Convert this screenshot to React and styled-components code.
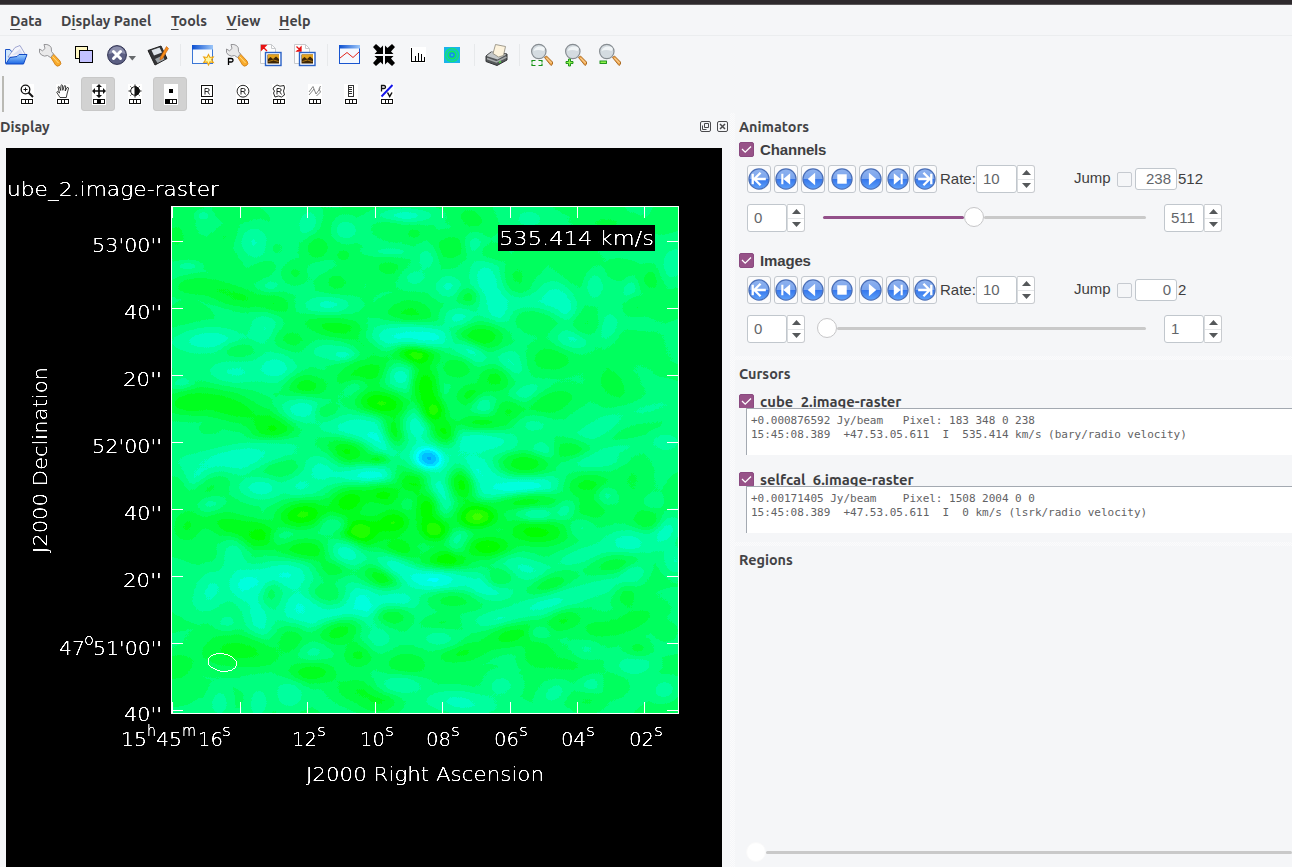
import React from 'react';
import styled, { createGlobalStyle, css } from 'styled-components';

const Global = createGlobalStyle`
  * { box-sizing: border-box; }
  html, body, #root { margin: 0; height: 100%; }
  body { background: #f5f6f8; overflow: hidden; color: #3b3b3e; }
`;
const uiFont = css`font-family: Ubuntu, 'Noto Sans', 'Open Sans', sans-serif;`;
const sans = css`font-family: 'Liberation Sans', Arial, sans-serif;`;

const Window = styled.div`
  height: 867px; width: 1292px; overflow: hidden;
  display: flex; flex-direction: column; background: #f5f6f8;
`;
const TitleStrip = styled.div`height: 5px; flex: none; background: #2e2a2d; border-bottom: 1px solid #5a5759;`;
const MenuBar = styled.nav`
  ${uiFont} height: 31px; flex: none; display: flex; padding-left: 10px;
  border-bottom: 1px solid #ebedef; font-size: 14.3px; font-weight: 600; line-height: 32px; color: #434346;
`;
const MenuItem = styled.div`
  width: ${p => p.$w}px; white-space: nowrap;
  u { text-underline-offset: 3px; text-decoration-thickness: 1px; }
`;
const Toolbar = styled.div`height: 38px; flex: none; display: flex; align-items: center; margin-left: -1px;`;
const ToolCell = styled.div`
  width: ${p => p.$w || 34}px; height: 34px; display: flex; align-items: center; justify-content: center;
  svg { display: block; flex: none; }
`;
const ToolSep = styled.div`width: ${p => p.$w || 11}px; display: flex; justify-content: center;
  &::after { content: ''; width: 1px; height: 22px; background: #e7e9eb; }`;
const MouseBar = styled.div`height: 39px; flex: none; display: flex; align-items: center; gap: 2px;`;
const Grip = styled.div`width: 2px; height: 36px; margin: 0 3px 0 2px; background: #b9b9b4;`;
const MouseButton = styled.div`
  width: 34px; height: 34px; border-radius: 3px; display: flex; align-items: center; justify-content: center;
  border: 1px solid ${p => (p.$on ? '#c8c8c8' : 'transparent')}; background: ${p => (p.$on ? '#d2d2d2' : 'transparent')};
  svg { display: block; flex: none; margin: 1px 0 0 1px; }
`;
const Body = styled.main`flex: 1; display: flex; min-height: 0;`;
const DisplayDock = styled.section`width: 730px; flex: none; display: flex; flex-direction: column;`;
const DockTitle = styled.h2`
  ${uiFont} margin: 0; height: 28px; flex: none; font-size: 14.4px; font-weight: 600;
  line-height: 28px; display: flex; align-items: center; color: #434346;
`;
const DockButtons = styled.div`display: flex; gap: 6px; padding-right: 2px; margin: -1px 0 0 auto;`;
const Filler = styled.div`flex: 1;`;
const Canvas = styled.div`margin: 7px 0 0 6px; width: 716px; height: 719px; background: #000; svg { display: block; }`;
const dots = css`background-image: conic-gradient(#fff 25%, transparent 0 50%, #fff 0 75%, transparent 0); background-size: 2px 2px;`;
const VSplit = styled.div`width: 5px; flex: none; ${dots} opacity: .55;`;
const HSplit = styled.div`height: 4px; flex: none; ${dots} opacity: .55; margin-left: -4px;`;
const Side = styled.section`flex: 1; padding-left: 4px; display: flex; flex-direction: column; min-width: 0;`;
const GroupHead = styled.div`
  height: ${p => p.$h || 15}px; flex: none; display: flex; gap: 6px; ${p => p.$clip && 'overflow: hidden;'}
  span { ${p => (p.$ui ? uiFont : sans)} font-size: ${p => (p.$ui ? 14.8 : 15)}px; font-weight: bold; line-height: 16px;
    letter-spacing: ${p => (p.$ui ? 0 : -0.15)}px; white-space: nowrap; color: #3e3e41; }
`;
const Check = styled.div`
  width: 15px; height: 15px; flex: none; border-radius: 2px; border: 1px solid ${p => (p.$on ? '#8a4a80' : '#c6cad0')};
  background: ${p => (p.$on ? '#975288' : 'transparent')}; display: flex; align-items: center; justify-content: center;
`;
const ControlRow = styled.div`height: 28px; flex: none; display: flex; align-items: center; margin: ${p => p.$m} 0 0 8px; ${sans} font-size: 15px;`;
const PlayButton = styled.div`
  width: ${p => (p.$wide ? 28 : 24)}px; height: 28px; margin-right: 3px; 
  border: 1px solid #c3c8ce; border-radius: 3px; background: #fbfbfc; display: flex; align-items: center; justify-content: center; flex: none;
  svg { flex: none; }
`;
const Label = styled.span`width: ${p => p.$w}px; flex: none; margin-left: ${p => p.$ml || 0}px; padding-bottom: ${p => p.$up || 1}px; white-space: nowrap; color: #3e3e40;`;
const Spin = styled.div`display: flex; width: ${p => p.$w}px; height: 28px; flex: none; color: #63666a;`;
const SpinField = styled.div`flex: 1; border: 1px solid #c1c7cd; border-radius: 3px; background: #fff; padding-left: 6px; line-height: 26px;`;
const SpinArrows = styled.div`
  width: 18px; border: 1px solid #c8cbcf; border-left-color: #d8dbde; border-radius: 0 3px 3px 0; background: #fff;
  display: flex; flex-direction: column; svg { display: block; margin: auto; }
  hr { margin: 0; border: 0; height: 1px; background: #e4e6e8; width: 100%; }
`;
const JumpField = styled.div`width: 42px; height: 22px; margin: 0 1px 0 3px; border: 1px solid #c1c7cd; border-radius: 3px; background: #fff;
  text-align: right; padding-right: 5px; line-height: 20px; color: #63666a;`;
const Slider = styled.div`height: 20px; width: ${p => p.$w}px; flex: none; display: flex; align-items: center; margin: 0 ${p => p.$mr || 0}px ${p => p.$mb || 0}px ${p => p.$ml || 0}px;`;
const Track = styled.div`height: 3px; border-radius: 2px; background: ${p => (p.$fill ? '#93508a' : '#c9c9c9')}; margin-top: 1px; ${p => (p.$w != null ? `width:${p.$w}px;` : 'flex:1;')}`;
const Thumb = styled.div`width: 20px; height: 20px; flex: none; border-radius: 50%; background: #fff; border: 1px solid ${p => (p.$flat ? '#fafafa' : '#c6c6c8')};`;
const CursorText = styled.pre`
  margin: 0 0 0 7px; height: 47px; flex: none; border: 1px solid #a3a9b1; border-right: 0; border-bottom: 0; background: #fff;
  font: 11px/14px 'DejaVu Sans Mono', monospace; letter-spacing: -.02px; color: #626264; padding: 5px 0 0 4px; z-index: 1;
`;
const Gap = styled.div`height: ${p => p.$h}px; flex: none;`;

/* ---------- raster field: [cx, cy, rx, ry, rotation, level] ---------- */
const A = [[100,32,30,22,0,8.2],[20,90,70,90,0,5.5],[165,95,60,40,-20,5.4],[250,110,65,85,0,8.4],[415,55,50,65,20,8.6],[525,75,55,50,0,8.6],[440,130,60,60,-30,5],[320,130,40,50,0,6],[520,152,40,35,0,5.2],[710,32,130,35,0,8.8],[650,75,80,45,0,5.4],[730,85,50,35,0,5.4],[660,140,110,25,0,8],[55,183,50,20,0,8],[280,195,60,40,-20,5.2],[372,208,60,50,0,5],[455,190,60,35,-15,7.7],[500,232,90,65,0,4.9],[665,190,80,45,0,5.3],[735,220,70,50,0,7.9],[70,243,100,45,0,4.3],[150,258,120,50,15,4.3],[210,280,110,45,10,4.3],[308,300,90,60,0,4.2],[300,243,50,30,0,7.5],[470,300,120,45,0,8.8],[715,325,120,70,0,4.3],[110,405,180,65,0,9],[285,370,80,80,0,8.7],[210,440,80,45,0,5.6],[500,370,170,50,8,4],[590,410,90,50,30,4],[370,400,90,60,0,5.4],[470,440,110,45,0,8.2],[520,450,60,30,0,8.8],[690,395,170,70,0,9.3],[735,452,100,60,0,2.2],[185,500,130,65,0,8.9],[315,485,110,80,0,8.9],[40,535,50,35,0,8.2],[60,595,130,60,0,3.4],[190,610,200,70,15,3.9],[310,668,100,70,0,3.3],[410,543,90,60,0,3.9],[590,505,160,65,-10,3.9],[690,512,70,70,0,8.7],[555,560,60,50,-30,7.8],[635,595,130,65,10,2.3],[395,612,100,60,0,8.9],[470,625,50,40,0,5.2],[765,550,60,90,0,2.9],[540,670,170,65,0,9],[620,705,110,80,20,9.8],[680,675,60,90,-20,3.8],[740,665,70,80,0,9.1],[515,738,140,60,5,3.4],[240,750,320,60,-8,8.7],[620,765,60,30,0,4]];
const B = [[150,40,90,65,20,5.2],[330,45,70,45,0,8],[570,60,150,45,0,5.6],[95,130,80,65,0,4.7],[165,115,50,55,0,8],[20,160,50,70,0,8],[215,150,60,45,0,5.1],[200,220,80,90,0,8.9],[85,243,65,55,0,8.7],[235,310,100,110,-15,9.3],[330,295,130,45,0,8.8],[400,280,100,80,0,8.9],[435,310,50,60,-30,8.7],[290,220,60,70,0,5.6],[460,190,70,110,-25,5.2],[145,275,45,40,0,5.2],[120,340,80,55,0,8.9],[20,395,140,52,5,10.2],[185,395,120,65,0,3.6],[340,350,100,60,0,5.4],[145,445,90,50,25,8.7],[280,480,85,65,0,9],[450,412,80,65,0,9],[570,365,65,90,0,8.7],[650,365,90,45,0,7.9],[525,245,45,70,0,8.1],[630,250,35,50,30,8],[695,225,55,60,0,5.1],[650,300,50,40,0,5.5],[500,360,60,50,0,5.7],[400,470,140,75,0,5],[115,490,80,60,0,4.4],[220,520,80,65,0,4.3],[155,570,80,55,0,3.9],[320,565,80,50,-10,8.3],[195,605,60,55,0,8.2],[265,620,75,60,0,4.3],[390,590,120,60,-20,4.6],[185,660,110,50,0,3.9],[575,530,90,140,-30,5.3],[650,420,130,80,0,5.6],[345,660,90,50,0,8],[550,665,140,50,-25,8.2],[660,620,150,50,-15,7.9],[180,710,170,60,0,9.5],[450,735,90,55,0,4.3],[365,735,60,55,0,8.1],[760,180,60,90,20,8],[18,550,55,90,-8,2.9],[40,615,58,66,0,2.1],[70,690,60,80,0,3.1],[740,710,70,45,0,8.1],[500,155,60,45,0,5.4],[310,770,90,40,0,4.6],[600,730,130,35,-10,7.8]];
const C = [[200,20,210,60,-15,8.9],[90,60,70,60,-30,8.7],[340,45,100,45,-10,5.6],[120,100,110,55,-35,5.4],[270,100,95,55,0,8.8],[120,155,60,45,-20,8.2],[450,40,90,100,0,8.8],[400,95,90,55,0,8.5],[600,60,180,46,0,9.7],[735,70,100,90,20,2.9],[15,120,60,90,0,5.3],[395,180,120,65,-5,2],[540,140,100,65,-20,2.5],[640,120,90,55,0,3.1],[570,230,110,80,0,1.9],[670,205,90,70,0,2.7],[200,220,170,65,15,3.4],[265,237,80,60,0,3.4],[55,210,70,70,0,4.4],[345,250,60,40,0,7.2],[490,210,60,40,0,7.3],[410,285,130,55,0,4],[490,340,90,45,0,4.8],[690,280,100,65,0,3.6],[530,295,95,60,20,9.2],[190,305,65,80,0,8.6],[350,360,130,75,0,9.4],[235,390,110,90,0,9.9],[120,410,80,110,30,8.8],[625,375,100,65,0,2.8],[680,335,120,50,25,9.2],[265,480,75,140,-10,8.9],[310,420,50,60,0,6],[395,465,110,110,20,9.8],[500,480,170,50,0,9.4],[580,450,105,115,0,10],[680,430,120,55,0,9.1],[470,410,80,45,0,6],[665,485,80,45,0,4.8],[170,505,60,50,0,8.1],[180,590,180,85,0,4.4],[270,600,120,65,20,4.5],[365,560,90,80,0,4.5],[505,530,120,60,-20,3.9],[435,595,80,55,0,7.8],[420,655,120,55,0,3.8],[20,630,80,65,0,4.7],[565,605,70,65,0,4.5],[625,550,70,60,0,8.2],[710,630,100,65,0,4.5],[570,710,130,65,10,4.5],[625,740,90,55,0,4.5],[690,690,115,50,0,8.4],[360,725,70,75,0,8.2],[265,745,50,70,0,8.1],[150,740,50,70,0,8.1]];
const D = [[170,45,140,95,20,9.9],[300,95,240,50,-3,9.7],[60,110,70,95,-10,9.2],[125,90,60,95,-20,3.2],[310,30,120,50,0,4],[500,90,120,55,0,4.5],[520,160,90,65,0,4.9],[640,100,80,130,0,5.3],[560,120,45,45,0,7.6],[530,20,140,40,-5,8.1],[170,185,100,62,0,1.2],[20,160,60,80,0,2.5],[42,225,78,64,0,1.5],[75,315,110,60,0,2.8],[120,260,50,50,0,8.2],[205,275,110,56,0,2.2],[350,230,150,65,0,3],[320,140,140,40,-5,3.9],[350,178,90,32,0,8.2],[435,165,55,40,-40,8.1],[485,220,60,45,0,7.5],[620,260,115,65,0,9],[735,230,60,95,40,8.8],[765,320,60,70,0,8.9],[700,140,45,35,0,7.6],[680,195,60,45,0,4.9],[490,300,150,45,-15,8.3],[320,340,120,55,10,8.8],[45,375,160,54,0,10.5],[190,395,130,65,15,9.4],[240,370,60,45,0,5.6],[390,390,100,50,-25,4.4],[590,330,110,50,-10,4.7],[640,360,70,45,-30,8.4],[530,400,170,50,-15,8.1],[380,450,190,55,-15,9],[240,490,130,50,-5,8.9],[90,440,110,45,0,5.1],[65,500,80,40,0,5.1],[620,430,55,60,0,5.1],[650,490,180,60,-20,5.3],[270,545,150,60,-15,4],[430,500,85,50,-20,4.7],[530,525,100,65,0,5.2],[360,535,50,40,0,7.6],[130,595,120,50,-10,4.2],[355,595,80,70,0,4.4],[430,630,140,65,10,5.2],[60,552,90,45,0,8],[500,585,65,45,0,7.6],[240,690,80,55,0,8.2],[130,740,165,65,5,9],[515,690,60,45,0,8.1],[400,715,70,45,-30,8],[590,690,70,65,0,5.5],[650,632,90,45,0,8.1],[735,705,60,55,-20,8.2],[500,745,90,50,0,5.4],[655,580,60,40,0,5.1],[740,530,50,45,0,5.2]];
const CORE = [[20,758,120,85,0,10.2],[27,760,58,44,15,13.8]];
const fields = [[170, 205, A], [420, 205, B], [170, 455, C], [420, 455, D], [420, 205, CORE]];
const levels = [...new Set(fields.flatMap(f => f[2].map(b => b[5])))];
const gray = l => { const v = Math.round(((l + 0.5) / 16) * 255); return `rgb(${v},${v},${v})`; };
const gid = l => 'lv' + String(l).replace('.', '_');
const RT = '.37 .25 .125 0 0 0 0 0 0 0 0 0 0 0 0 0';
const GT = '1 1 1 1 1 1 1 1 1 1 1 1 .87 .75 .62 .5';
const BT = '0 0 0 0 .125 .25 .37 .5 .62 .75 .87 1 1 1 1 1';

function Raster() {
  return (
    <>
      <defs>
        {levels.map(l => (
          <radialGradient id={gid(l)} key={l}>
            <stop offset="0" stopColor={gray(l)} stopOpacity="1" />
            <stop offset=".25" stopColor={gray(l)} stopOpacity=".86" />
            <stop offset=".5" stopColor={gray(l)} stopOpacity=".52" />
            <stop offset=".75" stopColor={gray(l)} stopOpacity=".18" />
            <stop offset="1" stopColor={gray(l)} stopOpacity="0" />
          </radialGradient>
        ))}
        <filter id="colormap" filterUnits="userSpaceOnUse" x="172" y="207" width="506" height="506" colorInterpolationFilters="sRGB">
          <feTurbulence type="fractalNoise" baseFrequency=".02 .03" numOctaves="1" seed="7" />
          <feColorMatrix values="1 0 0 0 0  1 0 0 0 0  1 0 0 0 0  0 0 0 0 1" result="n" />
          <feComposite in="SourceGraphic" in2="n" operator="arithmetic" k2="1" k3=".12" k4="-.06" />
          <feComponentTransfer>
            <feFuncR type="discrete" tableValues={RT} />
            <feFuncG type="discrete" tableValues={GT} />
            <feFuncB type="discrete" tableValues={BT} />
          </feComponentTransfer>
        </filter>
        <clipPath id="frame"><rect x="172" y="207" width="506" height="506" /></clipPath>
      </defs>
      <g clipPath="url(#frame)">
        <g filter="url(#colormap)">
          <rect x="172" y="207" width="506" height="506" fill={gray(6.5)} />
          {fields.map(([x, y, list], i) => (
            <g key={i} transform={`translate(${x} ${y}) scale(.33333)`}>
              {list.map(([cx, cy, rx, ry, r, l], j) => (
                <ellipse key={j} rx={rx} ry={ry} transform={`translate(${cx} ${cy}) rotate(${r})`} fill={`url(#${gid(l)})`} />
              ))}
            </g>
          ))}
        </g>
      </g>
    </>
  );
}

const PlotText = styled.text`font-family: 'DejaVu Sans', sans-serif; font-weight: 200; font-size: ${p => p.$size || 19.5}px; fill: #fff;`;
const T = ({ x, y, w, children, rot }) => (
  <PlotText x={rot ? undefined : x} y={rot ? undefined : y} textLength={w} lengthAdjust="spacingAndGlyphs" transform={rot ? `translate(${x} ${y}) rotate(-90)` : undefined}>{children}</PlotText>
);
const Sup = ({ x, y, w, children }) => (
  <PlotText x={x} y={y} textLength={w} lengthAdjust="spacingAndGlyphs" $size={15}>{children}</PlotText>
);
const yTicks = [241.5, 308.5, 375.5, 442.5, 509.5, 576.5, 643.5, 710.5];
const xTicks = [172.5, 240.5, 307.5, 375.5, 442.5, 510.5, 577.5, 644.5];
const raLabels = [['12', 292], ['10', 360], ['08', 426], ['06', 494], ['04', 561], ['02', 629]];

function Plot() {
  return (
    <svg width="716" height="719" viewBox="6 148 716 719">
      <defs>
        <filter id="pen" filterUnits="userSpaceOnUse" x="6" y="148" width="716" height="719" colorInterpolationFilters="sRGB">
          <feComponentTransfer><feFuncA type="linear" slope="2.2" intercept="-.25" /></feComponentTransfer>
        </filter>
      </defs>
      <Raster />
      <g stroke="#fff" fill="none" shapeRendering="crispEdges">
        <rect x="171.5" y="206.5" width="507" height="507" />
        {yTicks.map(y => <path key={y} d={`M172 ${y}h11M678 ${y}h-11`} />)}
        {xTicks.map(x => <path key={x} d={`M${x} 207v11M${x} 713v-11`} />)}
        <ellipse rx="14.4" ry="8.8" transform="translate(222.3 662.5) rotate(10)" />
      </g>
      <rect x="498" y="225" width="157" height="26" fill="#000" />
      <g filter="url(#pen)">
        <T x={499} y={245} w={155}>535.414 km/s</T>
        <T x={-5} y={196} w={224}>cube_2.image-raster</T>
        <T x={92} y={252} w={70}>53'00''</T>
        <T x={124} y={319} w={38}>40''</T>
        <T x={123} y={386} w={39}>20''</T>
        <T x={92} y={453} w={70}>52'00''</T>
        <T x={124} y={520} w={38}>40''</T>
        <T x={123} y={587} w={39}>20''</T>
        <T x={59} y={655} w={26}>47</T><Sup x={84} y={645} w={10}>o</Sup><T x={93} y={655} w={69}>51'00''</T>
        <T x={124} y={721} w={38}>40''</T>
        <T x={121} y={746} w={26}>15</T><Sup x={147} y={736} w={9}>h</Sup>
        <T x={156} y={746} w={26}>45</T><Sup x={182} y={736} w={14}>m</Sup>
        <T x={198} y={746} w={25}>16</T><Sup x={222} y={736} w={9}>s</Sup>
        {raLabels.map(([t, x]) => <g key={t}><T x={x} y={746} w={25}>{t}</T><Sup x={x + 25} y={736} w={9}>s</Sup></g>)}
        <T x={306} y={781} w={238}>J2000 Right Ascension</T>
        <T x={47} y={553} w={186} rot>J2000 Declination</T>
      </g>
    </svg>
  );
}

/* ---------- toolbar icons ---------- */
const Ico = ({ w = 24, h = 24, children, ...r }) => <svg width={w} height={h} viewBox={`0 0 ${w} ${h}`} fill="none" {...r}>{children}</svg>;
const FolderIcon = () => (
  <Ico><path d="M1.500 20.500V6.500h4.500l1.500 2H11" fill="#cfe6fb" stroke="#1c55c8" /><path d="M4 14L11 4.500l5-2 5 8.500-2 4z" fill="#f4f5fb" stroke="#8b93c8" strokeWidth=".8" /><path d="M8 12l8-6 3 5z" fill="#dcdff2" />
    <path d="M1.800 21L6 14.500l7-1 2-2h8L19.500 21z" fill="url(#fold)" stroke="#1149c4" />
    <defs><linearGradient id="fold" x1="0" y1="0" x2="0" y2="1"><stop stopColor="#9fd0ff" /><stop offset="1" stopColor="#1b66e4" /></linearGradient></defs></Ico>
);
const Wrench = ({ p }) => (
  <Ico><path d="M12 13l3-2.500 7 7.500q2 3-.5 4.500t-4-.5z" fill="#f9ab2b" stroke="#c9750d" strokeWidth=".8" /><path d="M14.500 13.500l6 6.500" stroke="#ffdc8a" />
    <path d="M6 1.500l1 4-2.500 2.300L1.500 6Q.5 10 3.500 12t6 .5l3 2 3-3.500-2-2.500Q14 4 11.500 2.500T6 1.500z" fill="#e9e9ea" stroke="#8b8b8e" strokeWidth=".9" />
    {p && <path d="M3.500 22v-6.500h2.500q2 0 2 1.800t-2 1.700h-2" stroke="#000" strokeWidth="1.300" />}</Ico>
);
const CopyIcon = () => <Ico shapeRendering="crispEdges"><rect x="3.500" y="3.500" width="12" height="12" fill="#fff8c4" stroke="#000" /><rect x="7.500" y="7.500" width="13" height="12" fill="#c3c1ff" stroke="#000" strokeWidth="1.200" /></Ico>;
const CloseIcon = () => (
  <Ico w={30} h={24}><circle cx="11" cy="12" r="9.400" fill="#5c5f83" stroke="#2f3150" /><path d="M2.500 11Q4.500 3.500 11 3.500T19.500 11Q11.500 8 2.500 11z" fill="#8c8fac" />
    <path d="M7.500 8.500l7 7M14.500 8.500l-7 7" stroke="#fff" strokeWidth="3" strokeLinecap="round" /><path d="M22.500 13h7.500l-3.700 4.500z" fill="#66696c" /></Ico>
);
const SaveIcon = () => (
  <Ico><path d="M2 7.500l13-4.500 6 12.500-12 6.500z" fill="#333437" stroke="#222" /><path d="M5.500 7.200l8-2.700 2.500 5-8 3z" fill="#dfe4ea" /><path d="M9 16l7.500-3.500 2 4-7 3.500z" fill="#9da3a8" />
    <path d="M20.500 3.500l2 2-6 10-2.500 1.500.5-3z" fill="#f88e19" stroke="#c55b08" strokeWidth=".6" /></Ico>
);
const NewWinIcon = () => (
  <Ico><defs><linearGradient id="wbar"><stop stopColor="#0c4fd0" /><stop offset="1" stopColor="#9cc6f8" /></linearGradient></defs>
    <rect x="1.500" y="2.500" width="20" height="18" fill="#f7fafe" stroke="#3a76d6" /><rect x="1" y="2" width="21" height="4.500" fill="url(#wbar)" />
    <path d="M17.500 11.500l1.500 3 3.300-.6-1.800 2.800 1.800 2.800-3.300-.6-1.500 3-1.500-3-3.300.6 1.800-2.800-1.800-2.800 3.300.6z" fill="#fff7a0" stroke="#eda513" strokeWidth="1.100" /></Ico>
);
const PictureIcon = ({ inward }) => (
  <Ico><path d="M1.500 1.500h11l4 4V20.500h-15z" fill="#fdfdfd" stroke="#c8cacd" /><path d="M12.500 1.500v4h4" stroke="#c8cacd" />
    <path d={inward ? 'M8 8V4L4 8zM3.500 3.500l3 3' : 'M2.500 2.500h4.500L2.500 7zM4 4l4 4'} fill="#e81212" stroke="#e81212" strokeWidth="1.300" />
    <rect x="6.500" y="9.500" width="15.500" height="13" fill="#fff" stroke="#2a62c6" strokeWidth="1.400" /><rect x="8.500" y="11.500" width="11.500" height="9" fill="#3d2505" />
    <path d="M9 11.500h11v4.500l-3-2.500-3 2.500-2.500-2L9 16z" fill="#e3a21e" /><path d="M9.500 18.500q5-3 10 0" stroke="#b07a18" /></Ico>
);
const ProfileIcon = () => <Ico><rect x="1.500" y="2.500" width="20" height="18" fill="#f4f8fe" stroke="#1955cf" /><rect x="1" y="2" width="21" height="3.500" fill="url(#wbar)" /><path d="M2 15l7-5.500 6 5 6-5.500" stroke="#e2231a" /></Ico>;
const CollapseIcon = () => (
  <Ico><g fill="#000">{[0, 90, 180, 270].map(a => <path key={a} transform={`rotate(${a} 12 12)`} d="M1 4l3-3 4.500 4L11 2.500V11H2.500L5 8.500z" />)}</g></Ico>
);
const HistIcon = () => <Ico shapeRendering="crispEdges"><rect x="4" y="4" width="16" height="16" fill="#fff" /><path d="M5.500 5v13.500H19M9.500 18v-5M12.500 18v-8M15.500 18v-7M18.500 18v-4" stroke="#000" /><path d="M5 18.500h14M5.500 5v13" stroke="#000" strokeWidth="1.500" /></Ico>;
const RingsIcon = () => (
  <Ico><rect x="4" y="4" width="16" height="16" fill="#18b4ea" /><circle cx="12" cy="12" r="7.300" fill="#14e07c" /><circle cx="12" cy="12" r="5.800" fill="#14b4e0" /><circle cx="12" cy="12" r="4.600" fill="#10e860" /><circle cx="12" cy="12" r="2.800" fill="#1486f0" /><circle cx="12" cy="12" r="1.300" fill="#18d8b0" /></Ico>
);
const PrinterIcon = () => (
  <Ico><path d="M1 13l5-4 16 2v6l-10 5.500L1 18.500z" fill="#55585a" stroke="#303234" /><path d="M1.500 13l5-4 15 2.500-9 5z" fill="#c4c7c8" /><path d="M8 10.500L10.500 1.500l10 2-2 9-5 1.500z" fill="#fdf3dd" stroke="#8a8577" strokeWidth=".8" /><path d="M2 15.500l9.500 3.500 10-5" stroke="#a7aaab" strokeWidth="1.500" /><path d="M14 19.500l2-1" stroke="#57d04c" strokeWidth="1.500" /></Ico>
);
const Magnify = ({ kind }) => (
  <Ico><path d="M14.500 14.500l2-1.500 6 6q.8 2.500-1.500 3.500z" fill="#f0a64d" stroke="#a5641d" strokeWidth=".9" /><path d="M16.500 15l5 5" stroke="#ffe0ac" />
    <circle cx="8.800" cy="8.500" r="7.200" fill="#d4dbe0" stroke="#878d92" strokeWidth="1.200" /><path d="M3.500 8Q5 3 11 3.500T13.500 8Q8 6 3.500 8z" fill="#f1f5f7" />
    {kind === 'fit' && <path d="M2 19.500V17.500h3.500M8.500 17.500h3.500v2M2 20.500v2h3.500M8.500 22.500h3.500v-2" stroke="#159215" strokeWidth="1.200" />}
    {kind === 'in' && <path d="M2 18.500h2.500V16h2v2.500H9v2H6.500V23h-2v-2.500H2z" fill="#8ff24c" stroke="#138c10" strokeWidth=".9" />}
    {kind === 'out' && <rect x="2" y="18" width="6.500" height="2.500" fill="#8ff24c" stroke="#138c10" strokeWidth=".9" />}</Ico>
);

/* mouse tool glyphs sit above a three-cell button indicator */
const Mouse = ({ fill, children }) => (
  <svg width="14" height="21" viewBox="0 0 14 21" fill="none" stroke="#111">
    <rect width="14" height="21" fill="#fff" stroke="none" />{children}
    <g shapeRendering="crispEdges"><path d="M1.500 15.500h11v4h-11zM5.500 15.500v4M8.500 15.500v4" />
      {fill === 'mid' && <rect x="5" y="15" width="4" height="5" fill="#000" stroke="none" />}
      {fill === 'left' && <rect x="1" y="15" width="5" height="5" fill="#000" stroke="none" />}</g>
  </svg>
);
const RMark = () => <path d="M5 10.500V4.500h2.500q1.700 0 1.700 1.500T7.500 7.500H5M7.500 7.500l2 3" strokeWidth=".9" />;
const mouseTools = [
  [<g><circle cx="5.500" cy="5.500" r="4.300" fill="#fff" strokeWidth="1.300" /><path d="M3.500 5.500h4M5.500 3.500v4" /><path d="M8.500 8.500l4.500 4.500" strokeWidth="2" /></g>],
  [<path d="M4 13.500L.8 8.500q0-1 1-1l1.700 1.500L2 3q.7-1 1.500 0l1.200 3.500L5 1.300q.7-1 1.500 0l.3 5L8.300 1.800q.8-.7 1.400.2L9.200 7l1.900-3.500q1.200-.4 1.500.5L11 10l-.7 3.500z" fill="#fff" strokeWidth=".8" />],
  [<g><path d="M7 2v10M2 7h10" strokeWidth="1.700" /><path d="M7 0l3 3H4zM7 14l3-3H4zM0 7l3-3v6zM14 7l-3-3v6z" fill="#111" stroke="none" /></g>, 'mid', true],
  [<g><circle cx="7" cy="7" r="4.300" /><path d="M7 2.700a4.300 4.300 0 010 8.600z" fill="#111" /><path d="M7 .5v2M7 12v1.500M.5 7H2.500M12 7h1.500M2.500 2.500l1 1M11.500 2.500l-1 1M2.500 11.500l1-1M11.500 11.500l-1-1" /></g>],
  [<rect x="5" y="5" width="4" height="4" fill="#000" stroke="none" />, 'left', true],
  [<g><rect x="1.500" y="1.500" width="11" height="11" shapeRendering="crispEdges" /><RMark /></g>],
  [<g><circle cx="7" cy="7.200" r="5.900" strokeWidth=".9" /><RMark /></g>],
  [<g><path d="M2 3l3-2 3 1.200L12 1.500 12.500 4l-1 3 1 4-3 2-3-1-3.500 1-1.500-4L2.500 7 1 5z" strokeWidth=".9" /><RMark /></g>],
  [<path d="M1 8l4-5.500L8 10l4-5.500M1 11l2.500-3 2.500-3M8.500 12l4-4-1.500-3 1.500-3" stroke="#777" strokeWidth=".9" />],
  [<g shapeRendering="crispEdges"><path d="M4.500 1.500h5v11h-5zM5 3.500h3M5 5.500h3M5 7.500h3M5 9.500h3" stroke="#333" /></g>],
  [<g><path d="M1.500 7.500V1.500H4q1.500 0 1.500 1.500T4 4.500H1.500" strokeWidth="1.300" /><path d="M7.500 8.500l2.200 4L12 8.500" strokeWidth="1.500" /><path d="M1.500 12.500L12.500 1" stroke="#1414e8" strokeWidth="1.900" /></g>],
];

/* ---------- playback ---------- */
const shapes = {
  first: <path d="M4.500 5.500v10M17 10.500H7M12 4.500l-6 6 6 6" stroke="#fff" strokeWidth="2.200" fill="none" />,
  prev: <path d="M6 5.500h2v10H6zM14.500 5v11l-6.500-5.500z" fill="#fff" />,
  back: <path d="M12.500 4.500v12l-7-6z" fill="#fff" />,
  stop: <rect x="6" y="6" width="9" height="9" fill="#fff" />,
  play: <path d="M8.500 4.500v12l7-6z" fill="#fff" />,
  next: <path d="M6.500 5v11l6.500-5.500zM13 5.500h2v10h-2z" fill="#fff" />,
  last: <path d="M16.500 5.500v10M4 10.500h10M9 4.500l6 6-6 6" stroke="#fff" strokeWidth="2.200" fill="none" />,
};
const PlayIcon = ({ kind }) => (
  <svg width="22" height="22" viewBox="0 0 21 21">
    <defs><linearGradient id="ball" x1="0" y1="0" x2="0" y2="1"><stop stopColor="#8fb2ee" /><stop offset=".48" stopColor="#7aa5ee" /><stop offset=".52" stopColor="#3677ec" /><stop offset="1" stopColor="#5fa2fb" /></linearGradient></defs>
    <circle cx="10.500" cy="10.500" r="9.600" fill="url(#ball)" stroke="#4a6fb8" strokeWidth="1.200" />{shapes[kind]}
  </svg>
);
const Tick = () => <svg width="11" height="9" viewBox="0 0 11 9"><path d="M1 4l3.200 3.200L10 1.500" fill="none" stroke="#fff" strokeWidth="1.300" /></svg>;
const SpinBox = ({ w, value }) => (
  <Spin $w={w}><SpinField>{value}</SpinField>
    <SpinArrows><svg width="9" height="5"><path d="M0 5l4.500-5L9 5z" fill="#55585a" /></svg><hr /><svg width="9" height="5"><path d="M0 0l4.500 5L9 0z" fill="#55585a" /></svg></SpinArrows>
  </Spin>
);

function Animator({ name, jump, total, end, children }) {
  return (
    <>
      <GroupHead><Check $on><Tick /></Check><span>{name}</span></GroupHead>
      <ControlRow $m="8px">
        {Object.keys(shapes).map(k => <PlayButton key={k} $wide={k === 'stop'}><PlayIcon kind={k} /></PlayButton>)}
        <Label $w={36}>Rate:</Label>
        <SpinBox w={59} value="10" />
        <Label $w={43} $up={3} $ml={39}>Jump</Label>
        <Check />
        <JumpField>{jump}</JumpField>
        <Label $w={40}>{total}</Label>
      </ControlRow>
      <ControlRow $m="11px">
        <SpinBox w={58} value="0" />
        {children}
        <SpinBox w={58} value={end} />
      </ControlRow>
    </>
  );
}

const Cursor = ({ name, text }) => (
  <>
    <GroupHead $ui $h={14} $clip><Check $on><Tick /></Check><span>{name}</span></GroupHead>
    <CursorText>{text}</CursorText>
  </>
);

export default function App() {
  return (
    <>
      <Global />
      <Window>
        <TitleStrip />
        <MenuBar>
          <MenuItem $w={51}><u>D</u>ata</MenuItem>
          <MenuItem $w={110}>D<u>i</u>splay Panel</MenuItem>
          <MenuItem $w={55.5}><u>T</u>ools</MenuItem>
          <MenuItem $w={52.5}><u>V</u>iew</MenuItem>
          <MenuItem $w={50}><u>H</u>elp</MenuItem>
        </MenuBar>
        <Toolbar>
          <ToolCell><FolderIcon /></ToolCell><ToolCell><Wrench /></ToolCell><ToolCell><CopyIcon /></ToolCell>
          <ToolCell $w={40}><CloseIcon /></ToolCell><ToolCell $w={33}><SaveIcon /></ToolCell>
          <ToolSep $w={12} />
          <ToolCell><NewWinIcon /></ToolCell><ToolCell><Wrench p /></ToolCell><ToolCell><PictureIcon /></ToolCell><ToolCell><PictureIcon inward /></ToolCell>
          <ToolSep />
          <ToolCell><ProfileIcon /></ToolCell><ToolCell><CollapseIcon /></ToolCell><ToolCell><HistIcon /></ToolCell><ToolCell><RingsIcon /></ToolCell>
          <ToolSep />
          <ToolCell><PrinterIcon /></ToolCell>
          <ToolSep />
          <ToolCell><Magnify kind="fit" /></ToolCell><ToolCell><Magnify kind="in" /></ToolCell><ToolCell><Magnify kind="out" /></ToolCell>
        </Toolbar>
        <MouseBar>
          <Grip />
          {mouseTools.map(([g, fill, on], i) => <MouseButton key={i} $on={on}><Mouse fill={fill}>{g}</Mouse></MouseButton>)}
        </MouseBar>
        <Body>
          <DisplayDock>
            <DockTitle>Display
              <DockButtons>
                <svg width="11" height="11" viewBox="0 0 11 11" fill="none" stroke="#4a4a4d"><rect x=".5" y=".5" width="10" height="10" rx="1.500" /><path d="M4.500 2.500h4v4h-4zM6.500 8.500h-4v-4" /></svg>
                <svg width="11" height="11" viewBox="0 0 11 11" fill="none" stroke="#4a4a4d"><rect x=".5" y=".5" width="10" height="10" rx="1.500" /><path d="M3 3l5 5M8 3L3 8" strokeWidth="1.500" /></svg>
              </DockButtons>
            </DockTitle>
            <Canvas><Plot /></Canvas>
          </DisplayDock>
          <VSplit />
          <Side>
            <DockTitle>Animators</DockTitle>
            <Gap $h={1} />
            <Animator name="Channels" jump="238" total="512" end="511">
              <Slider $w={323} $ml={18} $mr={18} $mb={2}><Track $fill $w={141} /><Thumb /><Track /></Slider>
            </Animator>
            <Gap $h={21} />
            <Animator name="Images" jump="0" total="2" end="1">
              <Slider $w={329} $ml={12} $mr={18} $mb={2}><Thumb /><Track /></Slider>
            </Animator>
            <Gap $h={13} />
            <HSplit />
            <DockTitle>Cursors</DockTitle>
            <Gap $h={6} />
            <Cursor name="cube_2.image-raster" text={'+0.000876592 Jy/beam   Pixel: 183 348 0 238\n15:45:08.389  +47.53.05.611  I  535.414 km/s (bary/radio velocity)'} />
            <Gap $h={17} />
            <Cursor name="selfcal_6.image-raster" text={'+0.00171405 Jy/beam    Pixel: 1508 2004 0 0\n15:45:08.389  +47.53.05.611  I  0 km/s (lsrk/radio velocity)'} />
            <Gap $h={9} />
            <HSplit />
            <DockTitle>Regions</DockTitle>
            <Filler />
            <Slider $w={546} $ml={7}><Thumb $flat /><Track /></Slider>
            <Gap $h={5} />
          </Side>
        </Body>
      </Window>
    </>
  );
}
